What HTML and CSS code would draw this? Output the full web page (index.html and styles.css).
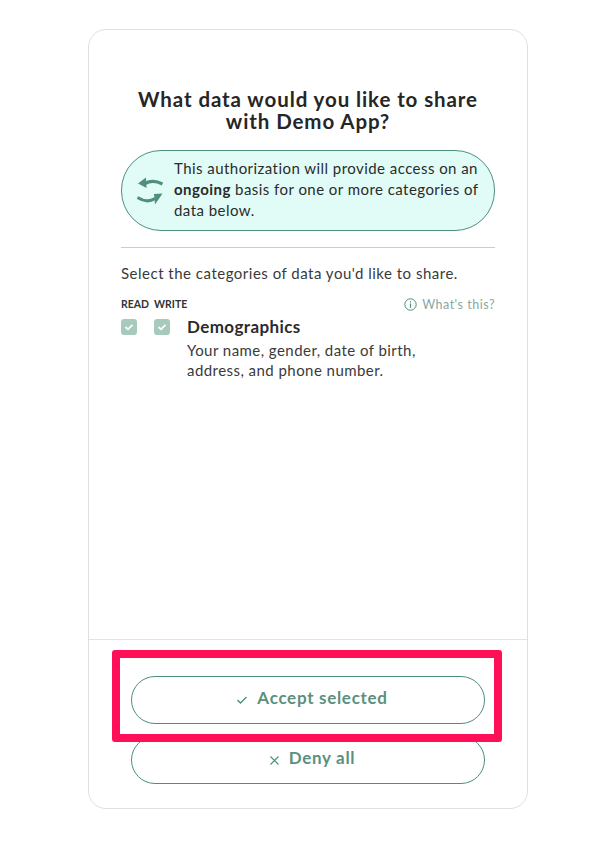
FILE: index.html
```html
<!DOCTYPE html>
<html lang="en">
<head>
    <meta charset="UTF-8">
    <meta name="viewport" content="width=device-width, initial-scale=1.0">
    <title>Share data</title>
    <link rel="stylesheet" href="styles.css">
</head>
<body>
    <div class="card">
        <div class="card-body">
            <h1>What data would you like to share with Demo App?</h1>
            <div class="notice">
                <svg class="notice-icon" width="26" height="28" viewBox="0 0 26 28">
                    <path d="M8 6.500 Q16 2 25.500 7" fill="none" stroke="#4f8f7d" stroke-width="3.200"/>
                    <path d="M1 6.500 L9 .5 L9.500 11 Z" fill="#4f8f7d"/>
                    <path d="M.5 20.500 Q10 26.500 18 21.500" fill="none" stroke="#4f8f7d" stroke-width="3.200"/>
                    <path d="M25.500 16.500 L17 17 L18 27.500 Z" fill="#4f8f7d"/>
                </svg>
                <p>This authorization will provide access on an <b>ongoing</b> basis for one or more categories of data below.</p>
            </div>
            <p class="lead">Select the categories of data you'd like to share.</p>
            <div class="table-head">
                <span class="col-label">READ</span>
                <span class="col-label">WRITE</span>
                <span class="whats-this">
                    <svg width="13" height="13" viewBox="0 0 13 13">
                        <circle cx="6.500" cy="6.500" r="5.700" fill="none" stroke="#4f8f7d" stroke-width="1"/>
                        <path d="M6.500 5.500 V9.800 M6.500 3.200 V4.400" stroke="#4f8f7d" stroke-width="1.200"/>
                    </svg>
                    What's this?
                </span>
            </div>
            <div class="category">
                <span class="check">
                    <svg width="10" height="8" viewBox="0 0 10 8"><path d="M1.500 4 L4 6.300 L8.500 1.800" fill="none" stroke="#fff" stroke-width="1.800"/></svg>
                </span>
                <span class="check">
                    <svg width="10" height="8" viewBox="0 0 10 8"><path d="M1.500 4 L4 6.300 L8.500 1.800" fill="none" stroke="#fff" stroke-width="1.800"/></svg>
                </span>
                <div class="category-text">
                    <h2>Demographics</h2>
                    <p>Your name, gender, date of birth, address, and phone number.</p>
                </div>
            </div>
        </div>
        <div class="card-footer">
            <button class="action-button">
                <svg width="12" height="10" viewBox="0 0 12 10"><path d="M1.500 5 L4.500 8 L10.500 2" fill="none" stroke="#4f8f7d" stroke-width="1.400"/></svg>
                <span class="action-label">Accept selected</span>
            </button>
            <button class="action-button">
                <svg width="11" height="11" viewBox="0 0 11 11"><path d="M1.500 1.500 L9.500 9.500 M9.500 1.500 L1.500 9.500" fill="none" stroke="#4f8f7d" stroke-width="1.200"/></svg>
                <span class="action-label">Deny all</span>
            </button>
        </div>
        <div class="highlight"></div>
    </div>
</body>
</html>
```

FILE: styles.css
```css
body {
    font-family: Lato, Arial, sans-serif;
    margin: 0;
    padding: 29px 0 35px;
    background-color: #fff;
    color: #2b2b2b;
}

.card {
    position: relative;
    box-sizing: border-box;
    width: 440px;
    height: 780px;
    margin-left: 88px;
    border: 1px solid #e0e0e0;
    border-radius: 18px;
    display: flex;
    flex-direction: column;
}

.card-body {
    flex: 1;
    padding: 58px 32px 0;
}

h1 {
    margin: 0 auto 18px;
    width: 360px;
    font-size: 20.500px;
    font-weight: 700;
    letter-spacing: 0.9px;
    line-height: 22px;
    text-align: center;
    color: #262626;
}

.notice {
    box-sizing: border-box;
    height: 81px;
    display: flex;
    align-items: center;
    gap: 11px;
    padding: 0 10px 2px 15px;
    background-color: #e1fcf7;
    border: 1px solid #4f8f7d;
    border-radius: 40px;
    margin-bottom: 16px;
}

.notice-icon {
    flex: none;
    margin-top: 2px;
}

.notice p {
    margin: 0;
    font-size: 15px;
    letter-spacing: 0.45px;
    line-height: 21px;
}

.lead {
    margin: 0;
    padding-top: 15px;
    border-top: 1px solid #ccc;
    font-size: 15px;
    letter-spacing: 0.5px;
    line-height: 20px;
    color: #3a3a3a;
}

.table-head {
    display: flex;
    align-items: center;
    gap: 5px;
    margin-top: 13px;
    height: 16px;
}

.col-label {
    font-size: 10.500px;
    font-weight: 700;
    color: #333;
}

.whats-this {
    margin-left: auto;
    display: flex;
    align-items: center;
    gap: 5px;
    font-size: 12.500px;
    letter-spacing: 0.5px;
    color: #8aa89f;
}

.category {
    display: flex;
    margin-top: 6px;
}

.check {
    flex: none;
    width: 16px;
    height: 16px;
    margin: 1px 17px 0 0;
    border-radius: 3px;
    background-color: #a8cabd;
    display: flex;
    align-items: center;
    justify-content: center;
}

.category-text h2 {
    margin: 0 0 4px;
    font-size: 17px;
    font-weight: 700;
    letter-spacing: 0.4px;
    line-height: 18px;
    color: #2b2b30;
}

.category-text p {
    margin: 0;
    width: 260px;
    font-size: 15px;
    letter-spacing: 0.45px;
    line-height: 20px;
    color: #3a3a3a;
}

.card-footer {
    border-top: 1px solid #e3e3e3;
    padding: 36px 42px 24px;
    display: flex;
    flex-direction: column;
    gap: 12px;
}

.action-button {
    height: 48px;
    padding: 0 0 0 8px;
    border: 1px solid #4f8f7d;
    border-radius: 24px;
    background-color: #fff;
    color: #5b8f80;
    font-family: inherit;
    font-size: 17px;
    font-weight: 700;
    letter-spacing: 0.7px;
    display: flex;
    align-items: center;
    justify-content: center;
    gap: 9px;
    cursor: pointer;
}

.action-label {
    margin-bottom: 6px;
}

.highlight {
    position: absolute;
    left: 23px;
    top: 620px;
    width: 374px;
    height: 76px;
    border: 8px solid #ff0f57;
    border-radius: 3px;
}
```
